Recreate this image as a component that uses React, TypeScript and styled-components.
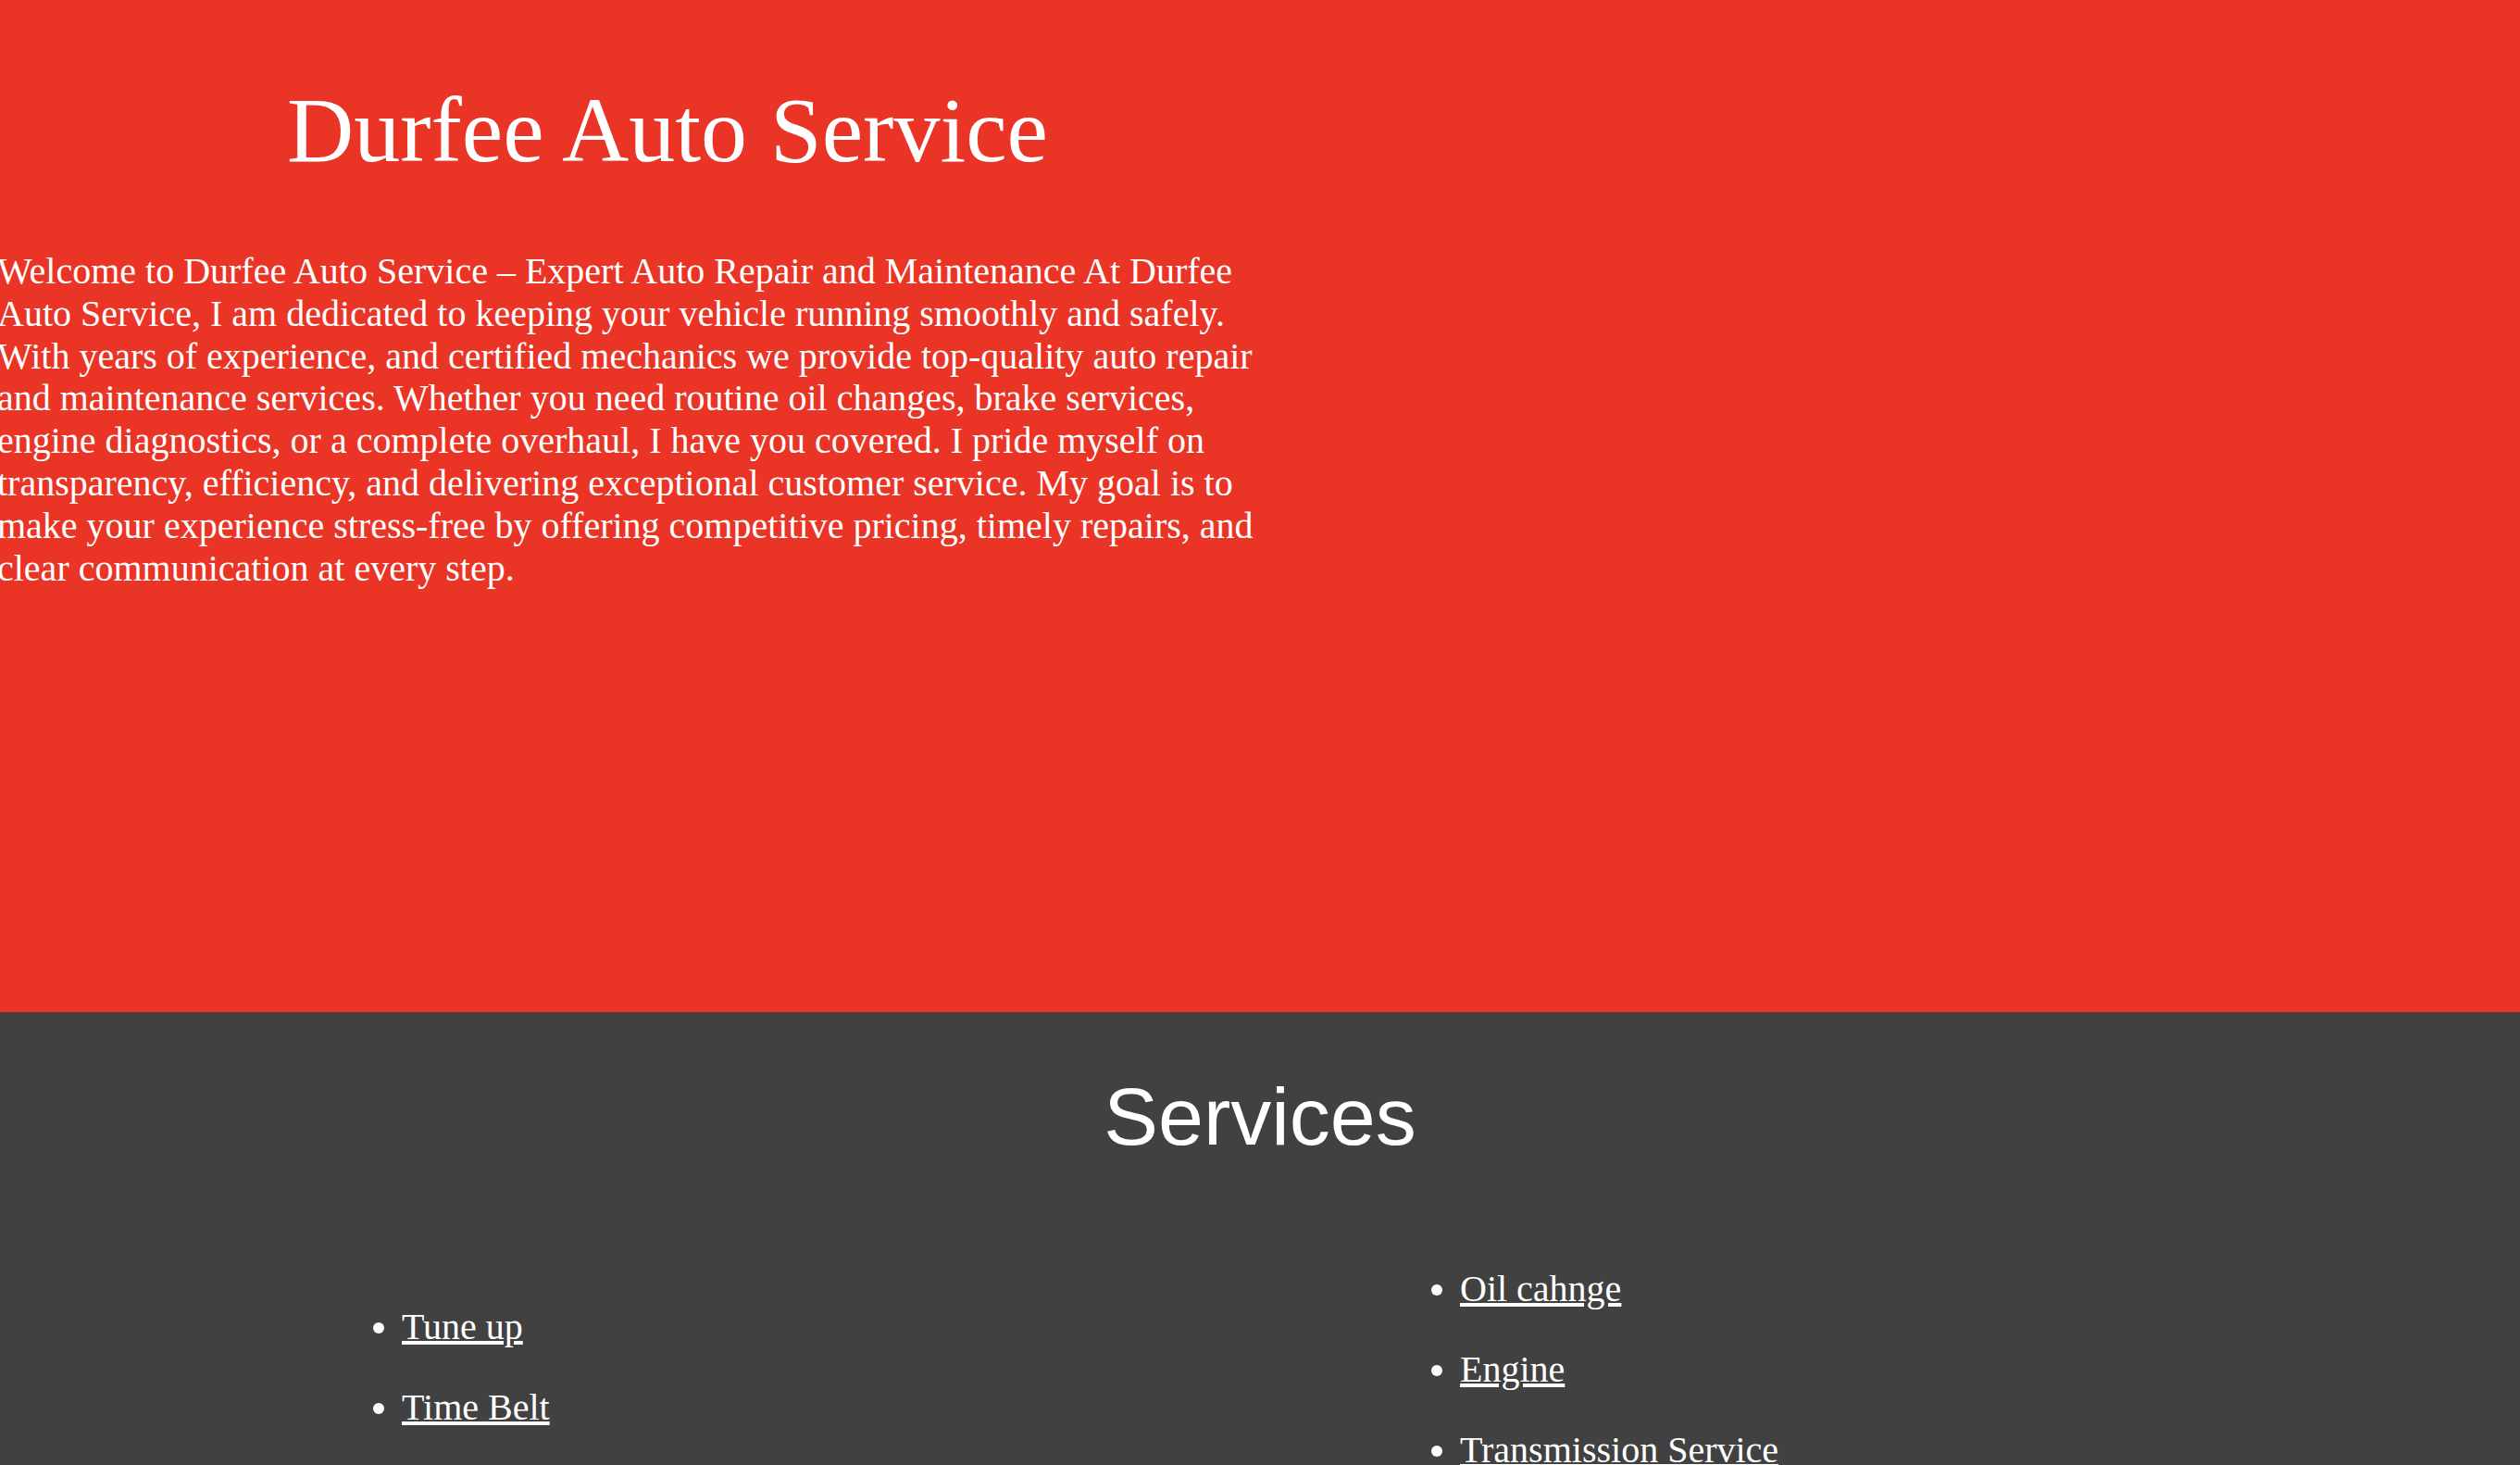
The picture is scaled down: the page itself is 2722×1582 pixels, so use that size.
import React from "react";
import styled, { createGlobalStyle } from "styled-components";

const GlobalStyle = createGlobalStyle`
  html, body {
    margin: 0;
    padding: 0;
  }
  body {
    font-family: "Liberation Serif", "Times New Roman", serif;
    background: #414141;
    overflow-x: hidden;
  }
`;

const Hero = styled.header`
  background: #e93426;
  color: #ffffff;
  height: 1093px;
  display: flex;
  align-items: flex-start;
`;

const TextColumn = styled.div`
  width: 1442px;
  display: flex;
  flex-direction: column;
`;

const Title = styled.h1`
  margin: 83px 0 72px;
  font-size: 100px;
  font-weight: 400;
  line-height: normal;
  text-align: center;
`;

const Intro = styled.p`
  margin: 0 62px 0 -3px;
  font-size: 40px;
  line-height: 45.8px;
`;

const Services = styled.section`
  background: #414141;
  color: #ffffff;
  padding-top: 62px;
`;

const SectionTitle = styled.h2`
  margin: 0;
  font-family: "Liberation Sans", Arial, sans-serif;
  font-size: 88px;
  font-weight: 400;
  line-height: normal;
  text-align: center;
`;

const Lists = styled.div`
  margin-top: 111px;
  padding-left: 354px;
  display: grid;
  grid-template-columns: 1143px 1143px;
  align-items: start;
`;

const ServiceList = styled.ul<{ $offset: number }>`
  margin: ${(p) => p.$offset}px 0 0;
  padding-left: 80px;
  list-style: disc;
  font-size: 40px;
  line-height: normal;
`;

const ServiceItem = styled.li`
  margin-bottom: 40px;
  &:last-child {
    margin-bottom: 0;
  }
`;

const ServiceLink = styled.a`
  color: #ffffff;
  text-decoration: underline;
`;

const leftServices = ["Tune up", "Time Belt"];
const rightServices = ["Oil cahnge", "Engine", "Transmission Service"];

export default function App() {
  return (
    <>
      <GlobalStyle />
      <Hero>
        <TextColumn>
          <Title>Durfee Auto Service</Title>
          <Intro>
            Welcome to Durfee Auto Service – Expert Auto Repair and Maintenance
            At Durfee Auto Service, I am dedicated to keeping your vehicle
            running smoothly and safely. With years of experience, and certified
            mechanics we provide top-quality auto repair and maintenance
            services. Whether you need routine oil changes, brake services,
            engine diagnostics, or a complete overhaul, I have you covered. I
            pride myself on transparency, efficiency, and delivering exceptional
            customer service. My goal is to make your experience stress-free by
            offering competitive pricing, timely repairs, and clear
            communication at every step.
          </Intro>
        </TextColumn>
      </Hero>
      <Services>
        <SectionTitle>Services</SectionTitle>
        <Lists>
          <ServiceList $offset={41}>
            {leftServices.map((s) => (
              <ServiceItem key={s}>
                <ServiceLink href="#">{s}</ServiceLink>
              </ServiceItem>
            ))}
          </ServiceList>
          <ServiceList $offset={0}>
            {rightServices.map((s) => (
              <ServiceItem key={s}>
                <ServiceLink href="#">{s}</ServiceLink>
              </ServiceItem>
            ))}
          </ServiceList>
        </Lists>
      </Services>
    </>
  );
}
